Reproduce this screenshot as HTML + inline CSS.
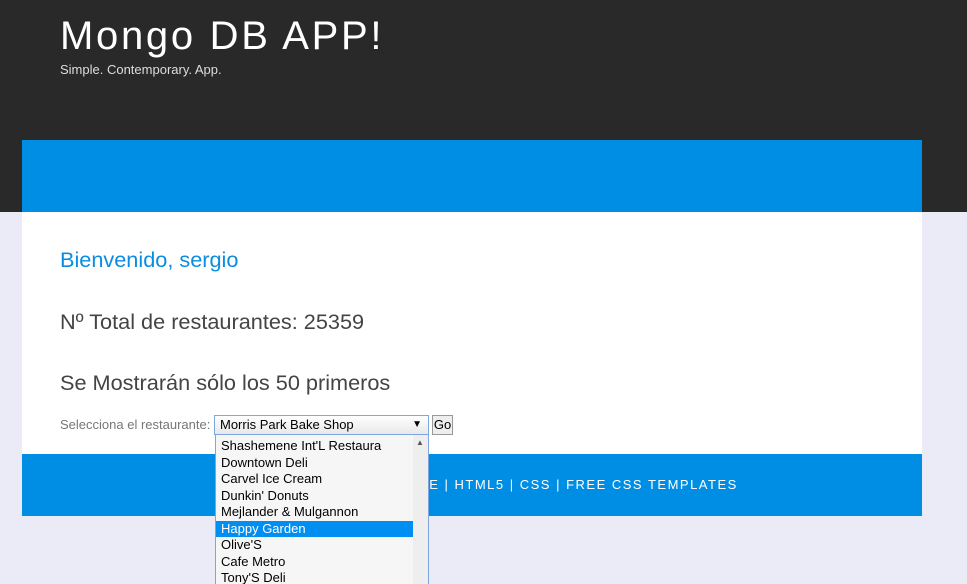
<!DOCTYPE html>
<html style="overflow:hidden"><head><meta charset="utf-8"><style>
body{margin:0;width:967px;height:584px;overflow:hidden;background:#ebebf8;font-family:"Liberation Sans",sans-serif;position:relative}
.top{position:absolute;left:0;top:0;width:967px;height:212px;background:#292929}
h1{position:absolute;left:60px;top:14px;margin:0;font-weight:normal;font-size:40px;letter-spacing:2.7px;color:#fff}
.sub{position:absolute;left:60px;top:62px;font-size:13px;color:#ddd}
.bar{position:absolute;left:22px;top:140px;width:900px;height:72px;background:#008ee4}
.main{position:absolute;left:22px;top:212px;width:900px;height:242px;background:#fff}
.foot{position:absolute;left:22px;top:454px;width:884px;padding-left:16px;height:62px;background:#008ee4;color:#fff;font-size:13px;letter-spacing:1.5px;text-align:center;line-height:62px}
.w{position:absolute;left:60px;top:247px;font-size:21.7px;color:#0a8de0}
.t{position:absolute;left:60px;font-size:21.7px;color:#444}
.lab{position:absolute;left:60px;top:417px;font-size:13px;color:#777}
.sel{position:absolute;left:214px;top:415px;width:213px;height:18px;border:1px solid #7ea6e0;background:linear-gradient(#fff,#e8e8e8);font-size:13px;line-height:18px;box-sizing:content-box}
.sel span{padding-left:5px}
.sel b{position:absolute;right:6px;top:0;font-size:10px}
.go{position:absolute;left:432px;top:415px;width:19px;height:18px;border:1px solid #999;background:#eee;font-size:13px;line-height:18px;text-align:center}
.list{position:absolute;left:215px;top:434px;width:212px;height:160px;border:1px solid #7ea6e0;background:#f6f6f6;font-size:13px;overflow:hidden}
.list .it{height:16.5px;line-height:16.5px;padding-left:5px;width:192px}
.list .h{background:#008ef0;color:#fff}
.sb{position:absolute;right:0;top:0;width:15px;height:160px;background:#eee}
</style></head><body>
<div class="top"></div>
<h1>Mongo DB APP!</h1>
<div class="sub">Simple. Contemporary. App.</div>
<div class="bar"></div>
<div class="main"></div>
<div class="w">Bienvenido, sergio</div>
<div class="t" style="top:309px">Nº Total de restaurantes: 25359</div>
<div class="t" style="top:370px">Se Mostrarán sólo los 50 primeros</div>
<div class="lab">Selecciona el restaurante:</div>
<div class="sel"><span>Morris Park Bake Shop</span><b>▼</b></div>
<div class="go">Go</div>
<div class="foot">COPYRIGHT © SIMPLE_BLUE | HTML5 | CSS | FREE CSS TEMPLATES</div>
<div class="list"><div class="sb"><span style="position:absolute;left:3px;top:3px;font-size:8px;color:#555">▲</span></div>
<div class="it" style="margin-top:3px">Shashemene Int'L Restaura</div><div class="it">Downtown Deli</div><div class="it">Carvel Ice Cream</div><div class="it">Dunkin' Donuts</div><div class="it">Mejlander &amp; Mulgannon</div><div class="it h">Happy Garden</div><div class="it">Olive'S</div><div class="it">Cafe Metro</div><div class="it">Tony'S Deli</div></div>
</body></html>
